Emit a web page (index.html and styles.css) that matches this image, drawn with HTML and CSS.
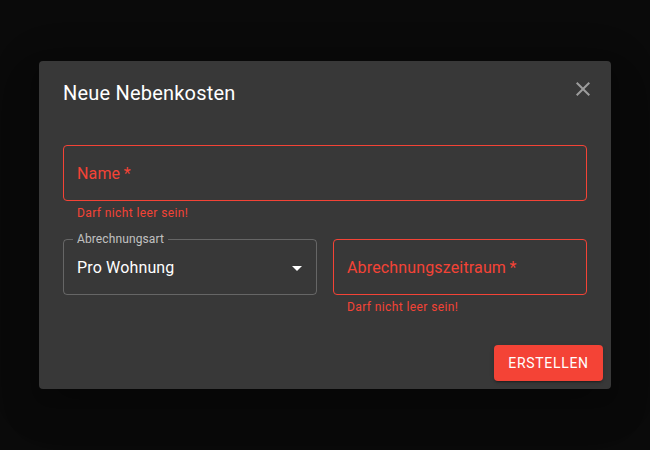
FILE: index.html
```html
<!DOCTYPE html>
<html lang="de">
<head>
<meta charset="utf-8">
<title>Neue Nebenkosten</title>
<link rel="stylesheet" href="styles.css">
</head>
<body>
<div class="backdrop">
  <div class="dialog">
    <div class="title">Neue Nebenkosten</div>
    <button class="close" aria-label="Schließen">
      <svg viewBox="0 0 24 24" width="24" height="24"><path d="M19 6.41 17.59 5 12 10.59 6.41 5 5 6.41 10.59 12 5 17.59 6.41 19 12 13.41 17.59 19 19 17.59 13.41 12z"/></svg>
    </button>
    <div class="content">
      <div class="field-wrap">
        <div class="field error"><span class="placeholder">Name&thinsp;*</span></div>
        <div class="helper">Darf nicht leer sein!</div>
      </div>
      <div class="row">
        <div class="field-wrap">
          <div class="field">
            <span class="float-label">Abrechnungsart</span>
            <span class="value">Pro Wohnung</span>
            <svg class="arrow" viewBox="0 0 24 24" width="24" height="24"><path d="M7 10l5 5 5-5z"/></svg>
          </div>
        </div>
        <div class="field-wrap">
          <div class="field error"><span class="placeholder">Abrechnungszeitraum&thinsp;*</span></div>
          <div class="helper">Darf nicht leer sein!</div>
        </div>
      </div>
    </div>
    <div class="actions">
      <button class="btn">Erstellen</button>
    </div>
  </div>
</div>
</body>
</html>
```

FILE: styles.css
```css
* { box-sizing: border-box; }
html, body { margin: 0; padding: 0; }
body {
  background: #0a0a0a;
  font-family: Roboto, "Liberation Sans", sans-serif;
  color: #fff;
}
.backdrop {
  height: 100vh;
  display: flex;
  align-items: center;
  justify-content: center;
}
.dialog {
  position: relative;
  width: 572px;
  background: #383838;
  border-radius: 4px;
  box-shadow: 0 11px 15px -7px rgba(0,0,0,.2), 0 24px 38px 3px rgba(0,0,0,.14), 0 9px 46px 8px rgba(0,0,0,.12);
}
.title {
  padding: 16px 24px;
  font-size: 20px;
  line-height: 32px;
  font-weight: 400;
  letter-spacing: 0.01em;
}
.close {
  position: absolute;
  top: 8px;
  right: 8px;
  width: 40px;
  height: 40px;
  padding: 8px;
  border: 0;
  background: none;
  display: flex;
  align-items: center;
  justify-content: center;
}
.close svg { fill: rgba(255,255,255,0.5); }
.content {
  padding: 20px 24px 20px;
  display: flex;
  flex-direction: column;
  gap: 15px;
}
.row {
  display: flex;
  gap: 16px;
  align-items: flex-start;
}
.row .field-wrap { flex: 1; }
.field {
  position: relative;
  height: 56px;
  border: 1px solid rgba(255,255,255,0.23);
  border-radius: 4px;
  display: flex;
  align-items: center;
  padding: 1px 13px 0;
  font-size: 16px;
}
.field.error { border-color: #f44336; }
.placeholder { color: #f44336; letter-spacing: 0.00938em; }
.value { color: #fff; letter-spacing: 0.00938em; }
.float-label {
  position: absolute;
  left: 9px;
  top: -8px;
  padding: 0 4px;
  background: #383838;
  font-size: 12px;
  line-height: 14px;
  color: rgba(255,255,255,0.7);
  letter-spacing: 0.00938em;
}
.arrow {
  position: absolute;
  right: 7px;
  top: 16px;
  fill: #fff;
}
.helper {
  margin: 3px 14px 0;
  font-size: 12px;
  line-height: 1.66;
  letter-spacing: 0.03333em;
  color: #f44336;
}
.actions {
  padding: 8px;
  display: flex;
  justify-content: flex-end;
}
.btn {
  background: #f44336;
  color: #fff;
  border: 0;
  border-radius: 4px;
  width: 109px;
  padding: 6px 0;
  font-family: Roboto, "Liberation Sans", sans-serif;
  font-size: 14px;
  font-weight: 400;
  line-height: 24px;
  letter-spacing: 0.05em;
  text-transform: uppercase;
  box-shadow: 0 3px 1px -2px rgba(0,0,0,.2), 0 2px 2px 0 rgba(0,0,0,.14), 0 1px 5px 0 rgba(0,0,0,.12);
}
```
